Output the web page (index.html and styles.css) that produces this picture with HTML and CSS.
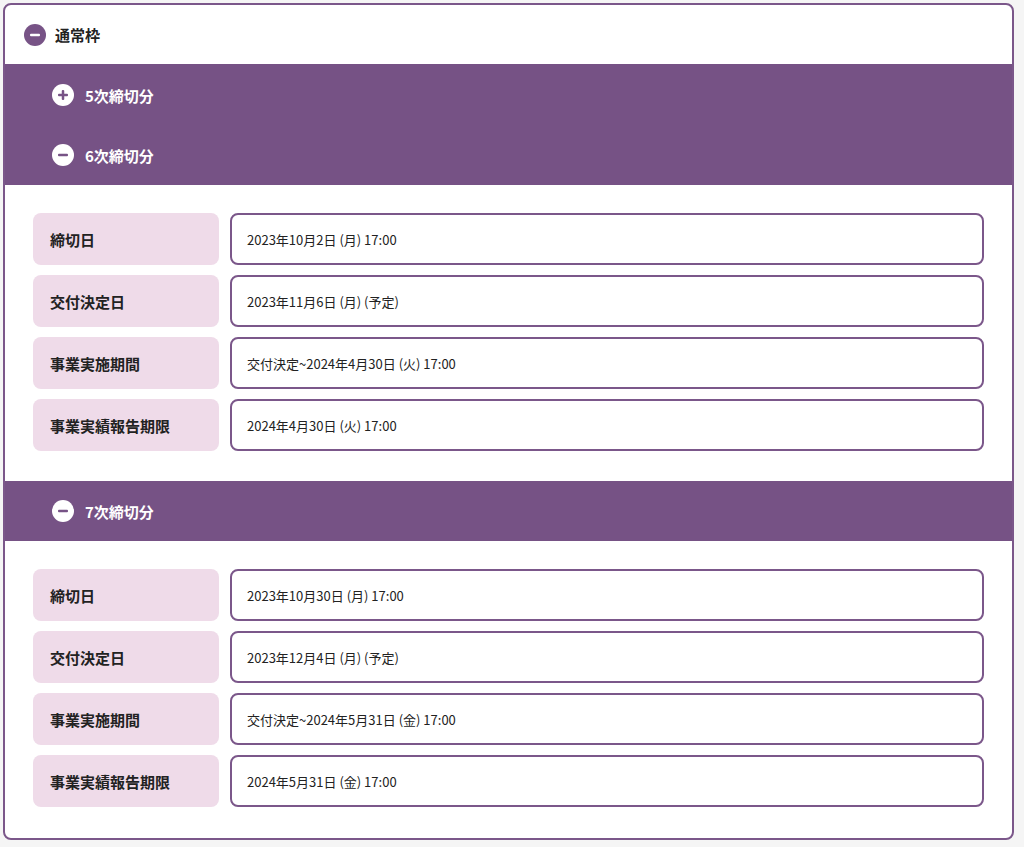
FILE: index.html
```html
<!DOCTYPE html>
<html lang="ja">
<head>
<meta charset="utf-8">
<link rel="stylesheet" href="styles.css">
</head>
<body>
<div class="card">
  <div class="head">
    <svg class="ico" width="22" height="22" viewBox="0 0 22 22"><circle cx="11" cy="11" r="11" fill="#775386"/><rect x="6" y="9.75" width="10" height="2.5" rx="1" fill="#fff"/></svg>
    <span class="head-title">通常枠</span>
  </div>
  <div class="band band-first">
    <div class="sub">
      <svg class="ico" width="22" height="22" viewBox="0 0 22 22"><circle cx="11" cy="11" r="11" fill="#fff"/><rect x="6" y="9.75" width="10" height="2.5" rx="1" fill="#775386"/><rect x="9.75" y="6" width="2.5" height="10" rx="1" fill="#775386"/></svg>
      <span>5次締切分</span>
    </div>
    <div class="sub">
      <svg class="ico" width="22" height="22" viewBox="0 0 22 22"><circle cx="11" cy="11" r="11" fill="#fff"/><rect x="6" y="9.75" width="10" height="2.5" rx="1" fill="#775386"/></svg>
      <span>6次締切分</span>
    </div>
  </div>
  <div class="content">
    <div class="label">締切日</div><div class="value">2023年10月2日 (月) 17:00</div>
    <div class="label">交付決定日</div><div class="value">2023年11月6日 (月) (予定)</div>
    <div class="label">事業実施期間</div><div class="value">交付決定~2024年4月30日 (火) 17:00</div>
    <div class="label">事業実績報告期限</div><div class="value">2024年4月30日 (火) 17:00</div>
  </div>
  <div class="band">
    <div class="sub">
      <svg class="ico" width="22" height="22" viewBox="0 0 22 22"><circle cx="11" cy="11" r="11" fill="#fff"/><rect x="6" y="9.75" width="10" height="2.5" rx="1" fill="#775386"/></svg>
      <span>7次締切分</span>
    </div>
  </div>
  <div class="content content-last">
    <div class="label">締切日</div><div class="value">2023年10月30日 (月) 17:00</div>
    <div class="label">交付決定日</div><div class="value">2023年12月4日 (月) (予定)</div>
    <div class="label">事業実施期間</div><div class="value">交付決定~2024年5月31日 (金) 17:00</div>
    <div class="label">事業実績報告期限</div><div class="value">2024年5月31日 (金) 17:00</div>
  </div>
</div>
</body>
</html>
```
FILE: styles.css
```css
html, body {
  margin: 0;
  padding: 0;
  background: #f5f5f5;
}
body {
  font-family: "Noto Sans CJK JP", "Noto Sans", sans-serif;
  color: #222;
  padding: 3px 10px 0 3px;
}
.card {
  background: #fff;
  border: 2px solid #7b578a;
  border-radius: 8px;
  overflow: hidden;
}
.ico {
  display: block;
  flex: none;
}
.head {
  height: 59px;
  display: flex;
  align-items: center;
  gap: 9px;
  padding-left: 19px;
}
.head-title {
  font-size: 15px;
  font-weight: 700;
  color: #222;
}
.band {
  background: #765285;
}
.band-first {
  padding-top: 1px;
}
.sub {
  height: 60px;
  display: flex;
  align-items: center;
  gap: 11px;
  padding-left: 47px;
  color: #fff;
  font-size: 15px;
  font-weight: 700;
}
.content {
  display: grid;
  grid-template-columns: 186px 1fr;
  column-gap: 11px;
  row-gap: 10px;
  padding: 28px 28px 30px 28px;
}
.content-last {
  padding-bottom: 31px;
}
.label {
  height: 52px;
  box-sizing: border-box;
  background: #efdbe9;
  border-radius: 8px;
  display: flex;
  align-items: center;
  padding-left: 17px;
  font-size: 15px;
  font-weight: 700;
  color: #222;
}
.value {
  height: 52px;
  box-sizing: border-box;
  border: 2px solid #7b578a;
  border-radius: 8px;
  display: flex;
  align-items: center;
  padding-left: 15px;
  font-size: 13px;
  color: #222;
}
```
